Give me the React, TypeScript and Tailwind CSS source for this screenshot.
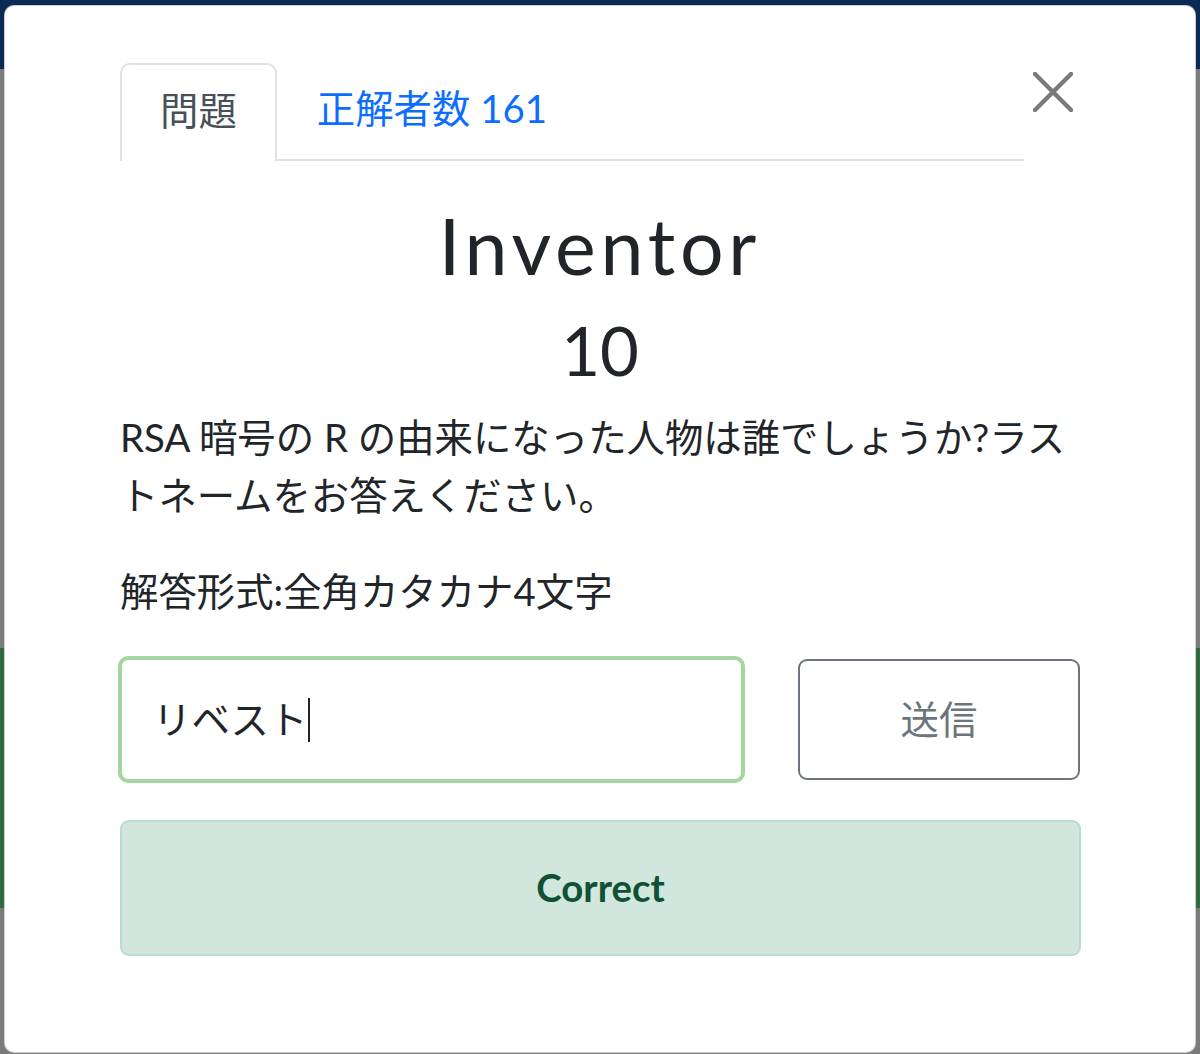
import React from "react";

const latin = "font-['Lato','Noto_Sans_CJK_JP',sans-serif]";

export default function App() {
  return (
    <div className="relative h-[1054px] w-[1200px] overflow-hidden bg-[#7c7c7c]">
      {/* backdrop layers (page behind modal) */}
      <div className="flex h-full flex-col">
        <div className="h-[69px] bg-[#0b2a55]" />
        <div className="h-[579px] bg-[#7c7c7c]" />
        <div className="h-[260px] bg-[#2f6a40]" />
        <div className="flex-1 bg-[#7c7c7c]" />
      </div>

      {/* modal */}
      <div
        className={`absolute left-[4px] top-[5px] h-[1048px] w-[1192px] rounded-[10px] border border-black/20 bg-white px-[115px] pt-[57px] text-[#212529] ${latin}`}
      >
        {/* close button */}
        <button className="absolute left-[1023px] top-[61px] flex h-[50px] w-[50px] items-center justify-center">
          <svg width="40" height="40" viewBox="0 0 40 40">
            <path
              d="M2 2 L38 38 M38 2 L2 38"
              stroke="#7a7a7a"
              strokeWidth="4.5"
              strokeLinecap="round"
            />
          </svg>
        </button>

        {/* tabs */}
        <div className="flex w-[904px] border-b-2 border-[#dee2e6]">
          <div className="-mb-[2px] rounded-t-[10px] border-2 border-b-0 border-[#dee2e6] bg-white px-[38px] pt-[17px] pb-[21px] text-[38.4px] leading-[57.6px] text-[#495057]">
            問題
          </div>
          <div className="px-[40px] pt-[17px] pb-[19px] text-[38.4px] leading-[57.6px] text-[#0d6efd]">
            正解者数 161
          </div>
        </div>

        {/* title */}
        <h2 className="mb-[19px] pt-[38px] text-center text-[77px] font-normal leading-[1.2] tracking-[4.8px]">
          Inventor
        </h2>
        <h3 className="mb-[19px] text-center text-[67px] font-normal leading-[1.2]">
          10
        </h3>

        <p className="mb-[38px] text-[38.4px] leading-[57.6px]">
          RSA 暗号の R の由来になった人物は誰でしょうか?ラストネームをお答えください。
        </p>
        <p className="mb-[36px] text-[38.4px] leading-[57.6px]">
          解答形式:全角カタカナ4文字
        </p>

        {/* answer row */}
        <div className="flex items-center justify-between">
          <div className="-ml-[2px] flex h-[127px] w-[627px] items-center rounded-[10px] border-[4px] border-[#a5d6a0] pl-[31px] text-[38.4px]">
            <span>リベスト</span>
            <span className="ml-[1px] inline-block h-[44px] w-[2px] bg-[#212529]" />
          </div>
          <button className="flex h-[121px] w-[282px] items-center justify-center rounded-[9px] border-2 border-[#6c757d] bg-white text-[38.4px] text-[#6c757d]">
            送信
          </button>
        </div>

        {/* result */}
        <div className="mt-[37px] flex h-[136px] w-[961px] items-center justify-center rounded-[9px] border-2 border-[#badbcc] bg-[#d1e7dd] text-[38.4px] font-bold text-[#0f5132]">
          Correct
        </div>
      </div>
    </div>
  );
}
